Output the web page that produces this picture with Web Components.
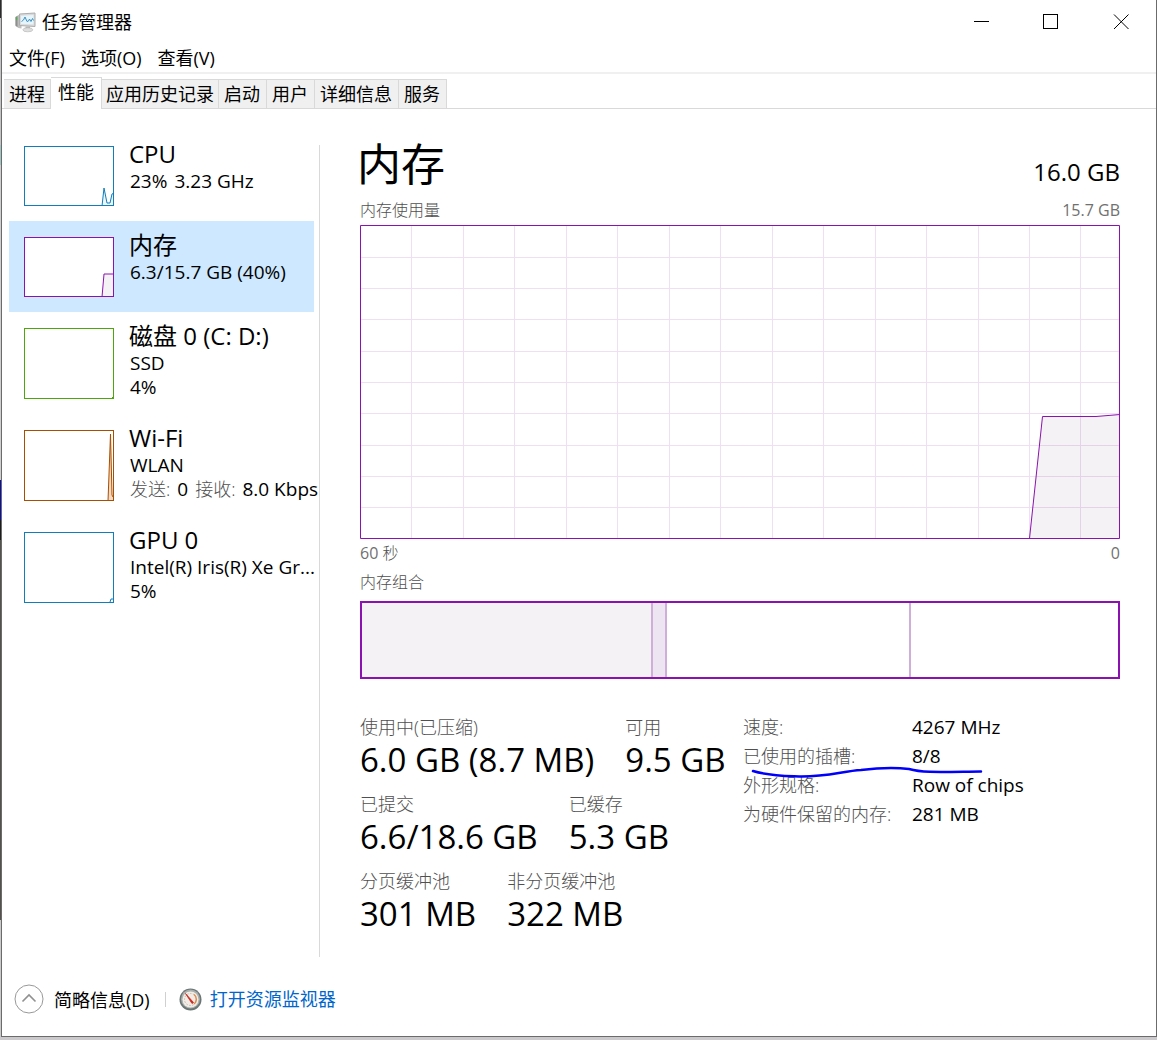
<!DOCTYPE html>
<html lang="zh-CN">
<head>
<meta charset="utf-8">
<title>任务管理器</title>
<style>
html, body { margin: 0; height: 100%; }
body {
  box-sizing: border-box; padding: 0 0 3px 1px; display: flex;
  background: linear-gradient(#2b2b2b 0 18px, #c4c4c4 18px 145px, #9fc7c2 145px 165px, #cfcfcf 165px 480px, #0b0bb0 480px 520px, #1c1c1c 520px 540px, #57514b 540px 920px, #cbc9cb 920px);
  --accent: #8b12ae; --muted: #505050;
  font-family: "Open Sans", "Noto Sans CJK SC", sans-serif; font-size: 18px; color: #000;
}
task-manager { flex: 1; }
</style>
</head>
<body>
<task-manager></task-manager>
<script>
const define = (name, html, setup) => customElements.define(name, class extends HTMLElement {
  connectedCallback() {
    if (this.shadowRoot) return;
    const root = this.attachShadow({ mode: "open" });
    root.innerHTML = typeof html === "function" ? html(this) : html;
    if (setup) setup(this, root);
  }
});
const reset = "button{font:inherit;color:inherit;background:none;border:0;padding:0;margin:0;text-align:left}";

define("title-bar", `<style>${reset}
:host{display:flex;align-items:center;height:44px;padding-left:13px}
.logo{width:21px;height:21px;margin-right:6px;flex:none}
h1{font:inherit;line-height:24px;margin:0;flex:1}
button{width:70px;height:44px;display:grid;place-items:center}
button svg{width:16px;height:16px}
</style>
<svg class="logo" viewBox="0 0 21 21">
<path d="M.5 5l3-2 3 .5v13l-3-.5-3-2z" fill="#bdbdbd"/><path d="M.5 5l2-1v11l-2-1.500z" fill="#8e8e8e"/><path d="M1.500 5.500v2" stroke="#35c436" stroke-width="1.300"/>
<path d="M4.500 2L20 1v13.500L4.500 13.500z" fill="#dadada" stroke="#adadad"/>
<path d="M6 3.700l12.500-.8v9.700L6 11.900z" fill="#e6f4fb"/>
<path d="M6.500 9.500l2-1.500 1.500-3 2 4.500 1.500-.5 1-2 1.500 2.500 1.500-3 1 2" fill="none" stroke="#3d93c4"/>
<path d="M10.500 14.500h4.500v3h-4.500z" fill="#b5b5b5"/><ellipse cx="12.800" cy="17.800" rx="5" ry="2" fill="#dedede" stroke="#b3b3b3" stroke-width=".6"/>
</svg>
<h1>任务管理器</h1>
<button aria-label="最小化"><svg viewBox="0 0 16 16" shape-rendering="crispEdges"><path d="M1 7.500h15" stroke="#000"/></svg></button>
<button aria-label="最大化"><svg viewBox="0 0 16 16" shape-rendering="crispEdges"><path d="M.5.5h14v14h-14z" stroke="#000" fill="none"/></svg></button>
<button aria-label="关闭"><svg viewBox="0 0 16 16"><path d="M1 .5l14.500 14.500M15.500.5L1 15" stroke="#000" fill="none"/></svg></button>`);

define("menu-bar", `<style>${reset}
:host{display:flex;gap:16px;height:28px;padding-left:7px;border-bottom:2px solid #f0f0f0}
button{line-height:28px}
</style><button>文件(F)</button><button>选项(O)</button><button>查看(V)</button>`);

define("tab-strip", `<style>${reset}
:host{display:flex;align-items:flex-end;height:34px;padding-left:2px;border-bottom:1px solid #d9d9d9}
button{height:29px;box-sizing:border-box;padding:0 5px;border:1px solid #d9d9d9;border-width:1px 1px 0 0;background:#f0f0f0;line-height:28px}
button:first-child{border-left-width:1px}
button[aria-selected=true]{background:#fff;height:32px;padding:0 7px 3px;margin-bottom:-1px}
button[aria-selected=true] ~ button{padding:0 6px 0 5px}
button[aria-selected=true] + button,button:last-child{padding:0 4px}
</style>
<button role="tab">进程</button><button role="tab" aria-selected="true">性能</button><button role="tab">应用历史记录</button><button role="tab">启动</button><button role="tab">用户</button><button role="tab">详细信息</button><button role="tab">服务</button>`,
  (host) => host.setAttribute("role", "tablist"));

const traces = {
  cpu: ["#117dbb", 60, "M78 60l2-18 3 15h3l2-9 2-1", "#eef5f9"],
  memory: ["#8b12ae", 60, "M78 60l2-23h10", "#f4f2f4"],
  disk: ["#4da60c", 71, "M88 70l1-1h1", "none"],
  wifi: ["#a74f01", 71, "M84 71l2.500-67 1.500 61 1 2h1", "#f5d9c4"],
  gpu: ["#117dbb", 71, "M86 70l1-3h3", "none"]
};
define("resource-item", (host) => {
  const [color, height, d, fill] = traces[host.getAttribute("kind")];
  return `<style>${reset}
:host{display:block}
:host([selected]) button{background:#cde8ff}
button{width:100%;display:flex;padding:8px 0 0 15px;gap:15px;box-sizing:border-box;height:${height + 31}px;white-space:nowrap}
svg{width:90px;height:${height}px;margin-top:8px;flex:none;background:#fff}
.text{display:block}
.name{display:block;font-size:24px;line-height:31px}
.sub{display:block;font-size:19px;line-height:24px;padding-left:1px}
</style><button><svg viewBox="0 0 90 ${height}"><path d="${d}V${height}z" fill="${fill}"/><path d="${d}" fill="none" stroke="${color}"/><rect x=".5" y=".5" width="89" height="${height - 1}" fill="none" stroke="${color}"/></svg>
<span class="text"><span class="name"><slot name="name"></slot></span><span class="sub"><slot></slot></span></span></button>`;
});

define("resource-list", `<style>
:host{display:block;width:310px;flex:none;border-right:1px solid #d9d9d9;box-sizing:content-box}
nav{padding-right:5px;margin-top:-15px}
.rates{display:inline-flex;gap:7px}
i{font-style:normal;font-size:18px;color:var(--muted);font-weight:300}
</style><nav>
<resource-item kind="cpu"><span slot="name">CPU</span><span class="rates"><span>23%</span><span>3.23 GHz</span></span></resource-item>
<resource-item kind="memory" selected><span slot="name">内存</span>6.3/15.7 GB (40%)</resource-item>
<resource-item kind="disk"><span slot="name">磁盘 0 (C: D:)</span>SSD<br>4%</resource-item>
<resource-item kind="wifi"><span slot="name">Wi-Fi</span>WLAN<br><span class="rates"><i>发送:</i><span>0</span><i>接收:</i><span>8.0 Kbps</span></span></resource-item>
<resource-item kind="gpu"><span slot="name">GPU 0</span>Intel(R) Iris(R) Xe Gr...<br>5%</resource-item>
</nav>`);

const xs = [51,103,154,206,257,309,360,412,463,515,566,618,669,720];
const ys = [32,63,94,126,157,188,220,251,282];
define("usage-chart", `<style>
:host{display:block;height:314px}
svg{display:block;width:100%;height:100%}
path,rect{vector-effect:non-scaling-stroke}
</style><svg viewBox="0 0 760 314" preserveAspectRatio="none" role="img" aria-label="内存使用量">
<path d="M669.500 313.500L682.500 191.500H736L760 189.500V314z" fill="#f4f2f4"/>
<path shape-rendering="crispEdges" d="${xs.map(x => `M${x}.5 0V314`).join("")}${ys.map(y => `M0 ${y}.5H760`).join("")}" stroke="#8b12ae" stroke-opacity=".14"/>
<path d="M669.500 313.500L682.500 191.500H736L760 189.500" fill="none" stroke="#8b12ae"/>
<rect x=".5" y=".5" width="759" height="313" fill="none" stroke="#8b12ae"/></svg>`);

define("composition-bar", `<style>
:host{display:flex;height:74px;border:2px solid var(--accent)}
span{box-sizing:border-box;border-right:2px solid #cfafd9}
.used{flex:289;background:#f4f2f4}.modified{flex:12;background:#ede5f2}.standby{flex:242}.free{flex:207;border:0}
</style><span class="used"></span><span class="modified"></span><span class="standby"></span><span class="free"></span>`);

define("stat-value", (host) => `<style>
:host{display:block;white-space:nowrap}
div{line-height:24px;color:var(--muted);font-weight:300}
b{display:block;font-weight:400;font-size:33px;line-height:42px}
</style><div>${host.getAttribute("label")}</div><b><slot></slot></b>`);

define("hardware-details", `<style>
:host{display:block;position:relative;white-space:nowrap}
table{border-collapse:collapse}
th,td{padding:0;line-height:29px;height:29px;text-align:left}
th{font-weight:300;color:var(--muted);width:169px}
td{font-size:19px}
svg{position:absolute;left:8px;top:52px;width:232px;height:14px}
</style><table>
<tr><th scope="row">速度:</th><td>4267 MHz</td></tr>
<tr><th scope="row">已使用的插槽:</th><td>8/8</td></tr>
<tr><th scope="row">外形规格:</th><td>Row of chips</td></tr>
<tr><th scope="row">为硬件保留的内存:</th><td>281 MB</td></tr>
</table>
<svg viewBox="0 0 232 14" aria-hidden="true"><path d="M2 6C18 11 36 11 48 11.500C76 12 92 6 110 5C134 2 150 3 158 4C172 8 188 7 230 6.500" fill="none" stroke="#0000fa" stroke-width="2.500" stroke-linecap="round"/></svg>`);

define("memory-panel", `<style>
:host{display:block;flex:1;min-width:0}
.row{display:flex;justify-content:space-between}
.head{align-items:baseline;height:51px}
h2{font-weight:400;font-size:44px;line-height:38px;margin:0 0 0 -3px}
.total{font-size:24px;line-height:38px}
.cap{font-size:16px;line-height:29px;color:var(--muted);font-weight:300}
.lat{font-weight:400;color:#707070}
composition-bar{margin-top:4px}
.info{display:flex;margin-top:34px}
.stats{flex:none;width:383px;display:grid;gap:11px;margin-top:2px}
.stats div{display:flex;gap:31px}
</style>
<div class="row head"><h2>内存</h2><span class="total">16.0 GB</span></div>
<div class="row cap"><span>内存使用量</span><span class="lat">15.7 GB</span></div>
<usage-chart></usage-chart>
<div class="row cap"><span><span class="lat">60</span> 秒</span><span class="lat">0</span></div>
<div class="cap">内存组合</div>
<composition-bar></composition-bar>
<div class="info">
<div class="stats">
<div><stat-value label="使用中(已压缩)">6.0 GB (8.7 MB)</stat-value><stat-value label="可用">9.5 GB</stat-value></div>
<div><stat-value label="已提交">6.6/18.6 GB</stat-value><stat-value label="已缓存">5.3 GB</stat-value></div>
<div><stat-value label="分页缓冲池">301 MB</stat-value><stat-value label="非分页缓冲池">322 MB</stat-value></div>
</div>
<hardware-details></hardware-details>
</div>`);

define("status-bar", `<style>${reset}
:host{display:flex;align-items:center;height:30px;padding:27px 12px 22px}
button{display:flex;align-items:center;gap:10px}
.chev{width:30px;height:30px}
.sep{width:1px;height:15px;background:#d0d0d0;margin:0 13px 0 15px}
.gauge{width:23px;height:23px;margin-right:8px}
a{color:#0066cc;text-decoration:none;line-height:24px}
</style>
<button><svg class="chev" viewBox="0 0 30 30" fill="none"><circle cx="15" cy="15" r="14" stroke="#999"/><path d="M8.500 17.500L15 11l6.500 6.500" stroke="#909090" stroke-width="1.600"/></svg><span>简略信息(D)</span></button>
<span class="sep"></span>
<svg class="gauge" viewBox="0 0 23 23"><circle cx="11.500" cy="11.500" r="11" fill="#6b7574"/><circle cx="11.500" cy="11" r="9.500" fill="#a9b0ae"/><circle cx="11.500" cy="11.500" r="8" fill="#f1ece6"/><circle cx="11.500" cy="11.500" r="6" fill="none" stroke="#c9b6a5" stroke-dasharray="1.500 1.500"/><path d="M15 6.500a6 6 0 0 1 0 9.500" fill="none" stroke="#e08b4a" stroke-width="1.500"/><path d="M6.500 5.500l8 9-1.500 1z" fill="#d8261c" stroke="#c9261c" stroke-width=".8"/></svg>
<a href="#">打开资源监视器</a>`);

define("task-manager", `<style>
:host{display:flex;flex-direction:column;background:#fff;border:1px solid #6b6b6b;border-top:0}
main{flex:1;display:flex;gap:40px;padding:36px 36px 0 7px}
</style>
<title-bar></title-bar><menu-bar></menu-bar><tab-strip></tab-strip>
<main><resource-list></resource-list><memory-panel></memory-panel></main>
<status-bar></status-bar>`);
</script>
</body>
</html>
